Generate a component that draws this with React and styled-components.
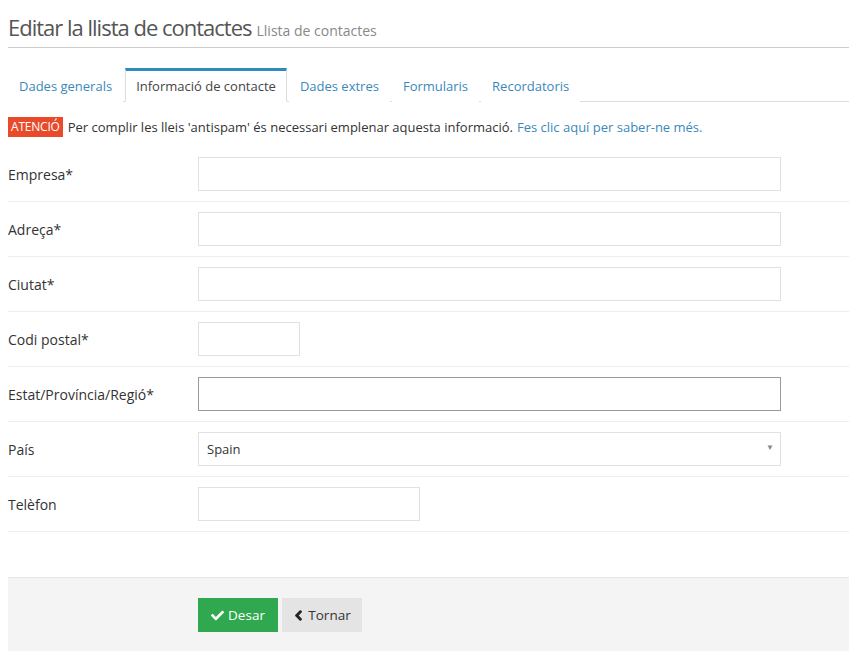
import React from 'react'
import styled, { createGlobalStyle } from 'styled-components'
import { FaCheck, FaChevronLeft } from 'react-icons/fa'

const GlobalStyle = createGlobalStyle`
    body {
        margin: 0;
        background: #fff;
        font-family: "Open Sans", "Liberation Sans", sans-serif;
        color: #333;
    }
`;

const Page = styled.div`
    padding-left: 8px;
    padding-top: 13px;
`;

const Header = styled.div`
    display: flex;
    align-items: baseline;
    gap: 5px;
    padding-bottom: 5px;
    border-bottom: 1px solid #ccc;
`;

const Title = styled.h1`
    margin: 0;
    font-size: 22px;
    font-weight: 400;
    color: #555;
    letter-spacing: -1px;
    line-height: 29px;
`;

const Subtitle = styled.small`
    font-size: 14px;
    color: #888;
`;

const Tabs = styled.ul`
    display: flex;
    list-style: none;
    margin: 20px 0 0;
    padding: 0;
    border-bottom: 1px solid #ddd;
`;

const Tab = styled.li`
    margin-right: 2px;
    margin-bottom: -1px;
    padding: 0 10px;
    height: 30px;
    line-height: 31px;
    font-size: 13px;
    color: ${p => p.active ? '#444' : '#3a89bb'};
    background: #fff;
    border: 1px solid ${p => p.active ? '#ddd' : 'transparent'};
    border-top: 3px solid ${p => p.active ? '#2d8bbd' : 'transparent'};
    border-bottom-color: ${p => p.active ? '#fff' : 'transparent'};
`;

const Notice = styled.p`
    display: flex;
    align-items: center;
    margin: 15px 0 0;
    font-size: 13px;
    color: #333;
`;

const Badge = styled.span`
    display: inline-block;
    background: #e94b2a;
    color: #fff;
    font-size: 12px;
    letter-spacing: -0.2px;
    padding: 0 3px;
    line-height: 20px;
    margin-right: 5px;
`;

const Link = styled.a`
    color: #3a89bb;
    text-decoration: none;
    margin-left: 4px;
`;

const Form = styled.div`
    margin-top: 10px;
`;

const Row = styled.div`
    display: grid;
    grid-template-columns: 190px 1fr;
    align-items: center;
    padding: 10px 0;
    border-bottom: 1px solid #eee;
`;

const Label = styled.label`
    font-size: 14px;
    color: #333;
`;

const Input = styled.div`
    box-sizing: border-box;
    width: ${p => p.width}px;
    height: 34px;
    background: #fff;
    border: 1px solid ${p => p.focused ? '#999' : '#e1e1e1'};
`;

const Select = styled.div`
    position: relative;
    box-sizing: border-box;
    width: 583px;
    height: 34px;
    display: flex;
    align-items: center;
    padding-left: 8px;
    font-size: 13px;
    color: #333;
    border: 1px solid #e1e1e1;
`;

const Caret = styled.span`
    position: absolute;
    right: 6px;
    top: 8px;
    font-size: 8px;
    color: #888;
`;

const Footer = styled.div`
    margin-top: 45px;
    padding: 20px 0 19px 190px;
    background: #f4f4f4;
    border-top: 1px solid #e6e6e6;
    display: flex;
    gap: 4px;
`;

const Button = styled.button`
    display: flex;
    align-items: center;
    justify-content: center;
    gap: 4px;
    height: 34px;
    width: 80px;
    border: none;
    font-family: inherit;
    font-size: 13.5px;
    color: ${p => p.primary ? '#fff' : '#333'};
    background: ${p => p.primary ? '#2fa84f' : '#e4e4e4'};
    padding: 0;

    svg {
        font-size: ${p => p.primary ? '13px' : '11px'};
        color: ${p => p.primary ? '#fff' : '#222'};
        stroke: currentColor;
        stroke-width: ${p => p.primary ? 0 : 50};
    }
`;

const fields = [
    { label: 'Empresa*', width: 583 },
    { label: 'Adreça*', width: 583 },
    { label: 'Ciutat*', width: 583 },
    { label: 'Codi postal*', width: 102 },
    { label: 'Estat/Província/Regió*', width: 583, focused: true },
]

export default function App() {
    return (
        <Page>
            <GlobalStyle />
            <Header>
                <Title>Editar la llista de contactes</Title>
                <Subtitle>Llista de contactes</Subtitle>
            </Header>
            <Tabs>
                <Tab>Dades generals</Tab>
                <Tab active>Informació de contacte</Tab>
                <Tab>Dades extres</Tab>
                <Tab>Formularis</Tab>
                <Tab>Recordatoris</Tab>
            </Tabs>
            <Notice>
                <Badge>ATENCIÓ</Badge>
                Per complir les lleis 'antispam' és necessari emplenar aquesta informació.
                <Link href="#">Fes clic aquí per saber-ne més.</Link>
            </Notice>
            <Form>
                {fields.map(f =>
                    <Row key={f.label}>
                        <Label>{f.label}</Label>
                        <Input width={f.width} focused={f.focused} />
                    </Row>
                )}
                <Row>
                    <Label>País</Label>
                    <Select>Spain<Caret>▼</Caret></Select>
                </Row>
                <Row>
                    <Label>Telèfon</Label>
                    <Input width={222} />
                </Row>
            </Form>
            <Footer>
                <Button primary><FaCheck /> Desar</Button>
                <Button><FaChevronLeft /> Tornar</Button>
            </Footer>
        </Page>
    )
}
